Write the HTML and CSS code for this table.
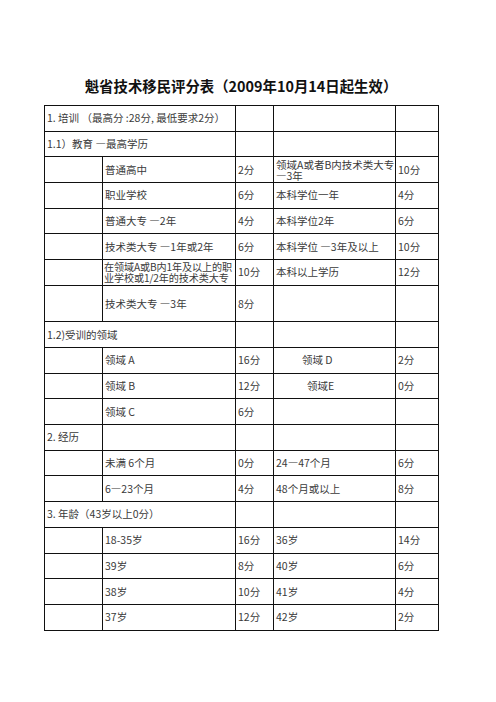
FILE: index.html
```html
<!DOCTYPE html>
<html lang="zh-CN">
<head>
<meta charset="utf-8">
<title>魁省技术移民评分表</title>
<link rel="stylesheet" href="styles.css">
</head>
<body>
<div class="page">
  <h1 class="title">魁省技术移民评分表（2009年10月14日起生效）</h1>
  <table class="score">
    <colgroup>
      <col class="c1"><col class="c2"><col class="c3"><col class="c4"><col class="c5">
    </colgroup>
    <tbody>
      <tr><td colspan="2" class="sec">1. 培训 （最高分 :28分, 最低要求2分）</td><td></td><td></td><td></td></tr>
      <tr><td colspan="2" class="sec">1.1）教育 —最高学历</td><td></td><td></td><td></td></tr>
      <tr><td></td><td>普通高中</td><td>2分</td><td class="wrap">领域A或者B内技术类大专—3年</td><td>10分</td></tr>
      <tr><td></td><td>职业学校</td><td>6分</td><td>本科学位一年</td><td>4分</td></tr>
      <tr><td></td><td>普通大专 —2年</td><td>4分</td><td>本科学位2年</td><td>6分</td></tr>
      <tr><td></td><td>技术类大专 —1年或2年</td><td>6分</td><td>本科学位 —3年及以上</td><td>10分</td></tr>
      <tr><td></td><td class="wrap tight">在领域A或B内1年及以上的职业学校或1/2年的技术类大专</td><td>10分</td><td>本科以上学历</td><td>12分</td></tr>
      <tr class="tall"><td></td><td>技术类大专 —3年</td><td>8分</td><td></td><td></td></tr>
      <tr><td colspan="2" class="sec">1.2)受训的领域</td><td></td><td></td><td></td></tr>
      <tr><td></td><td>领域 A</td><td>16分</td><td class="ind-d">领域 D</td><td>2分</td></tr>
      <tr><td></td><td>领域 B</td><td>12分</td><td class="ind-e">领域E</td><td>0分</td></tr>
      <tr><td></td><td>领域 C</td><td>6分</td><td></td><td></td></tr>
      <tr><td class="sec">2. 经历</td><td></td><td></td><td></td><td></td></tr>
      <tr><td></td><td>未满 6个月</td><td>0分</td><td>24—47个月</td><td>6分</td></tr>
      <tr><td></td><td>6—23个月</td><td>4分</td><td>48个月或以上</td><td>8分</td></tr>
      <tr><td colspan="2" class="sec">3. 年龄（43岁以上0分）</td><td></td><td></td><td></td></tr>
      <tr><td></td><td>18-35岁</td><td>16分</td><td>36岁</td><td>14分</td></tr>
      <tr><td></td><td>39岁</td><td>8分</td><td>40岁</td><td>6分</td></tr>
      <tr><td></td><td>38岁</td><td>10分</td><td>41岁</td><td>4分</td></tr>
      <tr><td></td><td>37岁</td><td>12分</td><td>42岁</td><td>2分</td></tr>
    </tbody>
  </table>
</div>
</body>
</html>
```

FILE: styles.css
```css
html, body {
  margin: 0;
  padding: 0;
  background: #ffffff;
}

.page {
  width: 394px;
  margin-left: 44px;
  padding-top: 76px;
}

.title {
  margin: 0 0 9px 0;
  font-family: "Noto Sans CJK SC", "Noto Sans", sans-serif;
  font-weight: 700;
  font-size: 14.4px;
  line-height: 20px;
  text-align: center;
  color: #111111;
  white-space: nowrap;
}

.score {
  width: 394px;
  table-layout: fixed;
  border-collapse: collapse;
  font-family: "Noto Sans CJK SC", "Noto Sans", sans-serif;
  font-size: 10.5px;
  color: #3a3a3a;
}

.c1 { width: 58px; }
.c2 { width: 133px; }
.c3 { width: 38px; }
.c4 { width: 122px; }
.c5 { width: 43px; }

.score tr {
  height: 25.7px;
}

.score tr.tall {
  height: 36.5px;
}

.score td {
  border: 1px solid #111111;
  padding: 0 0 0 2px;
  vertical-align: middle;
  line-height: 12px;
  white-space: nowrap;
  overflow: hidden;
}

.score td.wrap {
  white-space: normal;
  line-height: 11px;
  word-break: break-all;
}

.score td.tight {
  font-size: 10.1px;
  padding-left: 1px;
  letter-spacing: -0.1px;
}

.score td.ind-d {
  padding-left: 28px;
}

.score td.ind-e {
  padding-left: 33px;
}
```
